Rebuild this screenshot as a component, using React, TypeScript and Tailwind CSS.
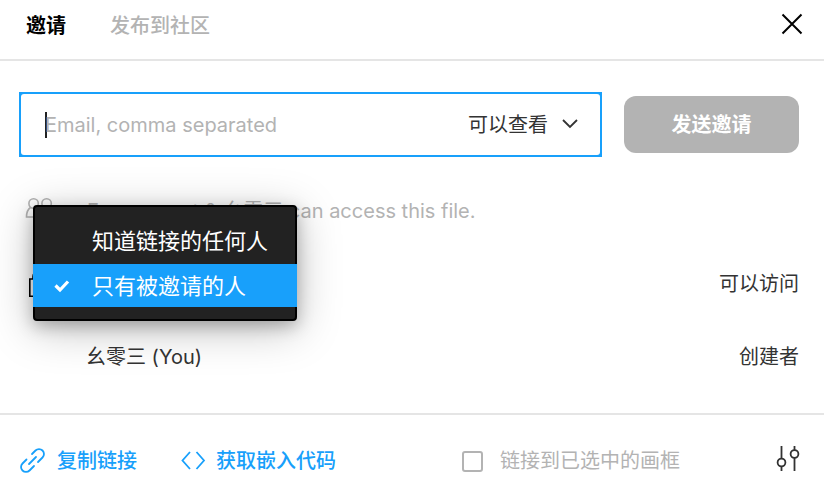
import { useState } from "react";

const accessOptions = ["知道链接的任何人", "只有被邀请的人"];

function PeopleIcon() {
  return (
    <svg width="30" height="26" viewBox="0 0 30 26" fill="none" stroke="currentColor" strokeWidth="1.6">
      <circle cx="8.600" cy="5.500" r="4.700" />
      <circle cx="21.600" cy="5.500" r="4.700" />
      <path d="M5.500 9.500c-3 2-4 5-4 9.500h14c0-4.500-1-7.500-4-9.500M24.500 9.500c3 2 4 5 4 9.500H19M18.500 9.500c-1.500 1-2 2-2.500 3" />
    </svg>
  );
}

function LockIcon() {
  return (
    <svg width="18" height="26" viewBox="0 0 18 26" fill="none" stroke="currentColor" strokeWidth="1.600">
      <path d="M0.800 8h16.400v17.200H0.800zM4 8V5.500a5 5 0 0 1 10 0V8" />
    </svg>
  );
}

function CheckIcon() {
  return (
    <svg width="18" height="14" viewBox="0 0 18 14" fill="none" stroke="currentColor" strokeWidth="3.200">
      <path d="M2.500 6.500L7 11l8-8.500" />
    </svg>
  );
}

function LinkIcon() {
  return (
    <svg width="28" height="28" viewBox="0 0 28 28" fill="none" stroke="currentColor" strokeWidth="1.8" strokeLinecap="round">
      <path d="M10 17l7-7M13 7l3.500-3.500a4.900 4.900 0 0 1 7 0a4.900 4.900 0 0 1 0 7L19 15M7.500 12.500L3.500 16.500a4.900 4.900 0 0 0 0 7a4.900 4.900 0 0 0 7 0L15 19" />
    </svg>
  );
}

function CodeIcon() {
  return (
    <svg width="26" height="20" viewBox="0 0 26 20" fill="none" stroke="currentColor" strokeWidth="1.8">
      <path d="M10 1L2.500 9.500l7.500 8.500M16.500 1l7.500 8.500L16.500 18" />
    </svg>
  );
}

function SettingsIcon() {
  return (
    <svg width="24" height="26" viewBox="0 0 24 26" fill="none" stroke="currentColor" strokeWidth="1.8">
      <path d="M5.500 0v12.500M5.500 20.500V25M18.500 0v4M18.500 12v13" />
      <circle cx="5.500" cy="16.500" r="3.900" />
      <circle cx="18.500" cy="8" r="3.900" />
    </svg>
  );
}

export default function App() {
  const [tab, setTab] = useState("invite");
  const [access, setAccess] = useState(accessOptions[1]);
  const [emails, setEmails] = useState("");

  return (
    <div className="min-h-screen bg-white font-['Inter','Noto_Sans_CJK_SC',sans-serif] text-xl leading-7 text-[#333]">
      <header className="flex h-[61px] items-center justify-between border-b-2 border-[#e5e5e5] pr-5 pb-2 pl-[26px]">
        <nav className="flex gap-11">
          <button
            onClick={() => setTab("invite")}
            className={tab === "invite" ? "font-bold text-black" : "font-medium text-[#b3b3b3]"}
          >
            邀请
          </button>
          <button
            onClick={() => setTab("community")}
            className={tab === "community" ? "font-bold text-black" : "font-medium text-[#b3b3b3]"}
          >
            发布到社区
          </button>
        </nav>
        <button aria-label="关闭" className="pb-1 text-black">
          <svg width="24" height="24" viewBox="0 0 24 24" stroke="currentColor" strokeWidth="2">
            <path d="M2.500 2.500l19 19M21.500 2.500l-19 19" />
          </svg>
        </button>
      </header>

      <main className="pt-[31px]">
        <form className="flex items-center gap-[22px] pr-[25px] pl-[19px]" onSubmit={(e) => e.preventDefault()}>
          <div className="flex h-[65px] min-w-0 flex-1 items-center bg-[#18a0fb] p-[2px]">
            <div className="flex h-full w-full items-center rounded-[3px] bg-white pr-4 pl-6">
              <div className="h-[26px] w-[2px] bg-[#222]" />
              <input
                aria-label="Email"
                value={emails}
                onChange={(e) => setEmails(e.target.value)}
                placeholder="Email, comma separated"
                className="-ml-[2px] min-w-0 flex-1 caret-transparent outline-none placeholder:text-[#b3b3b3]"
              />
              <div className="relative">
                <select aria-label="权限" className="appearance-none bg-transparent pr-9 outline-none">
                  <option>可以查看</option>
                  <option>可以编辑</option>
                </select>
                <svg
                  className="pointer-events-none absolute top-2 right-[6px]"
                  width="16"
                  height="10"
                  viewBox="0 0 16 10"
                  fill="none"
                  stroke="currentColor"
                  strokeWidth="1.800"
                >
                  <path d="M1 1L8 8l7-7" />
                </svg>
              </div>
            </div>
          </div>
          <button className="h-[57px] w-[175px] rounded-xl bg-[#b3b3b3] font-bold text-white">发送邀请</button>
        </form>

        <section className="relative pt-10 pr-[25px] pb-[42px] pl-[25px]">
          <div className="flex h-7 items-center gap-8 text-[#b3b3b3]">
            <PeopleIcon />
            <p>Everyone at &amp; 幺零三 can access this file.</p>
          </div>
          <div className="mt-[45px] flex h-7 items-center justify-between pl-1">
            <span className="text-black">
              <LockIcon />
            </span>
            <span>可以访问</span>
          </div>
          <div className="mt-[45px] flex h-7 items-center justify-between pl-[61px]">
            <span>幺零三 (You)</span>
            <span>创建者</span>
          </div>

          {/* Access menu */}
          <div
            role="listbox"
            aria-label="访问权限"
            className="absolute top-12 left-[33px] flex w-[264px] flex-col gap-[2px] rounded border-2 border-black bg-[#222] py-3 text-[22px] text-white shadow-[0_8px_44px_rgba(0,0,0,0.25),0_5px_16px_rgba(0,0,0,0.25)]"
          >
            {accessOptions.map((option) => (
              <button
                key={option}
                role="option"
                aria-selected={access === option}
                onClick={() => setAccess(option)}
                className={`-mx-[2px] flex h-[43px] items-center pl-5 ${
                  access === option ? "bg-[#18a0fb]" : ""
                }`}
              >
                <span className="w-[39px]">{access === option && <CheckIcon />}</span>
                {option}
              </button>
            ))}
          </div>
        </section>
      </main>

      <footer className="flex items-center border-t-2 border-[#e5e5e5] pt-[31px] pr-6 pb-7 pl-[19px]">
        <a href="#copy" className="flex items-center gap-[10px] font-medium text-[#18a0fb]">
          <LinkIcon />
          复制链接
        </a>
        <a href="#embed" className="ml-[43px] flex items-center gap-[10px] font-medium text-[#18a0fb]">
          <CodeIcon />
          获取嵌入代码
        </a>
        <label className="ml-auto flex items-center gap-[17px] text-[#b3b3b3]">
          <input type="checkbox" className="size-[21px] appearance-none rounded-[3px] border-2 border-[#b3b3b3] checked:bg-[#b3b3b3]" />
          链接到已选中的画框
        </label>
        <button aria-label="设置" className="ml-24 pb-1">
          <SettingsIcon />
        </button>
      </footer>
    </div>
  );
}
